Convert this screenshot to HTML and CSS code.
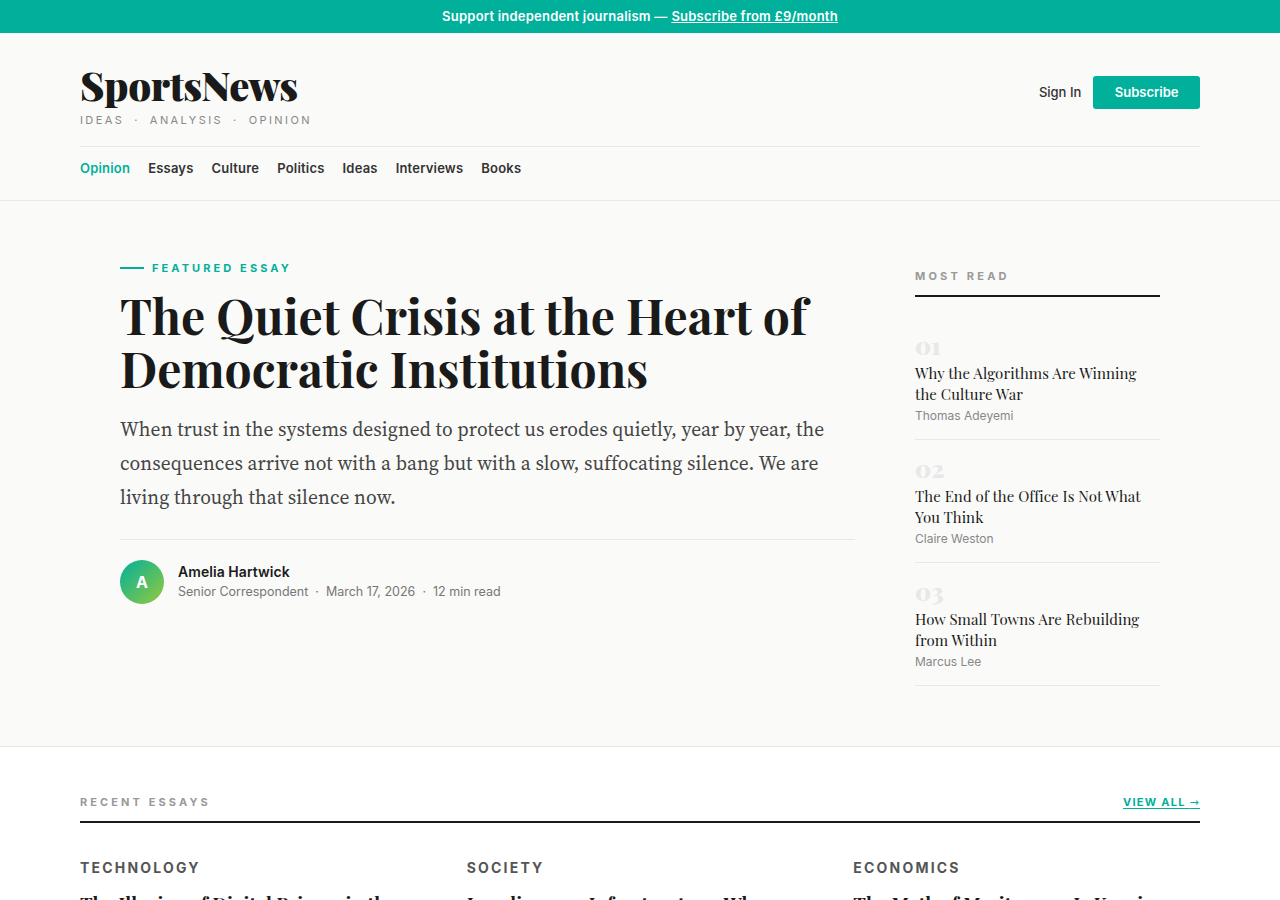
FILE: index.html
```html
<!DOCTYPE html>
<html lang="en">
<head><meta charset="utf-8"><title>SportsNews</title><link rel="stylesheet" href="styles.css"></head>
<body>
<div class="promo"><span>Support independent journalism — </span><a href="#" class="promo-link">Subscribe from £9/month</a></div>
<header class="header">
  <div class="header-top">
    <div class="brand">
      <div class="logo">SportsNews</div>
      <div class="tagline">IDEAS <span class="dot">·</span> ANALYSIS <span class="dot">·</span> OPINION</div>
    </div>
    <div class="actions"><a href="#" class="signin">Sign In</a><a href="#" class="subscribe">Subscribe</a></div>
  </div>
  <nav class="nav"><a href="#" class="active">Opinion</a><a href="#">Essays</a><a href="#">Culture</a><a href="#">Politics</a><a href="#">Ideas</a><a href="#">Interviews</a><a href="#">Books</a></nav>
</header>
<main class="hero">
  <article class="feature">
    <div class="eyebrow"><span class="rule"></span>FEATURED ESSAY</div>
    <h1 class="headline">The Quiet Crisis at the Heart of Democratic Institutions</h1>
    <p class="dek">When trust in the systems designed to protect us erodes quietly, year by year, the consequences arrive not with a bang but with a slow, suffocating silence. We are living through that silence now.</p>
    <div class="byline">
      <div class="avatar">A</div>
      <div class="byline-text">
        <div class="author">Amelia Hartwick</div>
        <div class="meta"><span>Senior Correspondent</span><span>·</span><span>March 17, 2026</span><span>·</span><span>12 min read</span></div>
      </div>
    </div>
  </article>
  <aside class="sidebar">
    <div class="side-title">MOST READ</div>
    <div class="side-item"><div class="num">01</div><div class="side-head">Why the Algorithms Are Winning the Culture War</div><div class="side-author">Thomas Adeyemi</div></div>
    <div class="side-item"><div class="num">02</div><div class="side-head">The End of the Office Is Not What You Think</div><div class="side-author">Claire Weston</div></div>
    <div class="side-item"><div class="num">03</div><div class="side-head">How Small Towns Are Rebuilding from Within</div><div class="side-author">Marcus Lee</div></div>
  </aside>
</main>
<section class="recent">
  <div class="recent-head"><span class="recent-title">RECENT ESSAYS</span><a href="#" class="view-all">VIEW ALL <span class="arrow">→</span></a></div>
  <div class="cards">
    <div class="card"><div class="cat">TECHNOLOGY</div><h3>The Illusion of Digital Privacy in the Age of Data</h3></div>
    <div class="card"><div class="cat">SOCIETY</div><h3>Loneliness as Infrastructure: Why Cities Fail Us</h3></div>
    <div class="card"><div class="cat">ECONOMICS</div><h3>The Myth of Meritocracy Is Keeping Everyone Apart</h3></div>
  </div>
</section>
</body>
</html>
```
FILE: styles.css
```css
* { box-sizing: border-box; }
html, body { margin: 0; padding: 0; }
body { background: #fafaf8; color: #1a1a1a; font-family: Inter, sans-serif; overflow: hidden; height: 900px; }
a { color: inherit; text-decoration: none; }
.promo { background: #00b09b; color: #fff; height: 33px; padding-bottom: 2px; display: flex; justify-content: center; align-items: center; font-size: 13px; font-weight: 600; letter-spacing: 0.22px; }
.promo-link { text-decoration: underline; margin-left: 4px; }
.header { padding: 0 80px; border-bottom: 1px solid #e8e8e8; height: 168px; }
.header-top { display: flex; justify-content: space-between; align-items: flex-start; padding-top: 27px; height: 114px; border-bottom: 1px solid #e8e8e8; }
.logo { font-family: "Playfair Display", serif; font-weight: 900; font-size: 40px; line-height: 50px; letter-spacing: -0.4px; }
.tagline { font-size: 11px; letter-spacing: 2.42px; color: #888; margin-top: 3px; }
.dot { margin: 0 4.5px; }
.actions { display: flex; align-items: center; gap: 12px; margin-top: 16px; }
.signin { font-size: 13px; font-weight: 500; color: #333; padding-bottom: 1px; }
.subscribe { background: #00b09b; color: #fff; font-size: 13px; font-weight: 600; padding: 0 21.5px 1px; height: 33px; display: flex; align-items: center; border-radius: 3px; }
.nav { display: flex; gap: 18px; padding-top: 13px; font-size: 13px; font-weight: 600; color: #333; letter-spacing: 0.2px; }
.active { color: #00b09b; }
.hero { display: grid; grid-template-columns: 735px 245px; gap: 60px; padding: 60px 120px; height: 546px; border-bottom: 1px solid #e8e8e8; }
.eyebrow { display: flex; align-items: center; gap: 8px; color: #00b09b; font-size: 11px; font-weight: 700; letter-spacing: 3.1px; }
.rule { width: 24px; height: 2px; background: #00b09b; }
.headline { font-family: "Playfair Display", serif; font-weight: 700; font-size: 48px; line-height: 53px; margin: 14px 0 18px; }
.dek { font-family: "Source Serif 4", serif; font-size: 19.5px; letter-spacing: 0.07px; line-height: 34px; color: #444; margin: 0 0 24px; }
.byline { display: flex; gap: 14px; align-items: center; border-top: 1px solid #e8e8e8; padding-top: 20px; }
.byline-text { padding-bottom: 2px; }
.avatar { width: 44px; height: 44px; border-radius: 50%; background: linear-gradient(135deg, #00b09b, #96c93d); color: #fff; display: flex; align-items: center; justify-content: center; font-weight: 700; font-size: 16px; }
.author { font-size: 14px; font-weight: 600; letter-spacing: 0.05px; }
.meta { display: flex; gap: 7px; font-size: 12.5px; color: #777; margin-top: 4px; }
.side-title { font-size: 11px; font-weight: 700; letter-spacing: 3.2px; color: #999; padding: 8px 0 12px; border-bottom: 2px solid #1a1a1a; margin-bottom: 34px; }
.side-item { border-bottom: 1px solid #e8e8e8; padding-bottom: 16px; margin-bottom: 14px; }
.num { font-family: "Playfair Display", serif; font-weight: 900; font-size: 24px; line-height: 28px; color: #e8e8e8; margin-bottom: 4px; }
.side-head { font-family: "Playfair Display", serif; font-size: 15px; line-height: 21px; font-weight: 400; letter-spacing: 0.07px; }
.side-author { font-size: 12px; line-height: 14px; color: #888; margin-top: 4px; }
.recent { padding: 48px 80px; background: #fff; }
.recent-head { display: flex; justify-content: space-between; align-items: center; padding-bottom: 12px; border-bottom: 2px solid #1a1a1a; margin-bottom: 36px; }
.recent-title { font-size: 11px; font-weight: 700; letter-spacing: 3.1px; color: #999; }
.view-all { font-size: 11px; font-weight: 700; letter-spacing: 1.25px; color: #00b09b; text-decoration: underline; text-underline-offset: 2px; }
.arrow { font-family: "DejaVu Sans", sans-serif; font-weight: 400; }
.cards { display: grid; grid-template-columns: repeat(3, 1fr); gap: 40px; }
.cat { font-size: 14px; line-height: 17px; font-weight: 700; letter-spacing: 2.2px; color: #555; margin-bottom: 15px; }
.card h3 { font-family: "Playfair Display", serif; font-size: 19px; line-height: 1.3; font-weight: 700; margin: 0; }
```
